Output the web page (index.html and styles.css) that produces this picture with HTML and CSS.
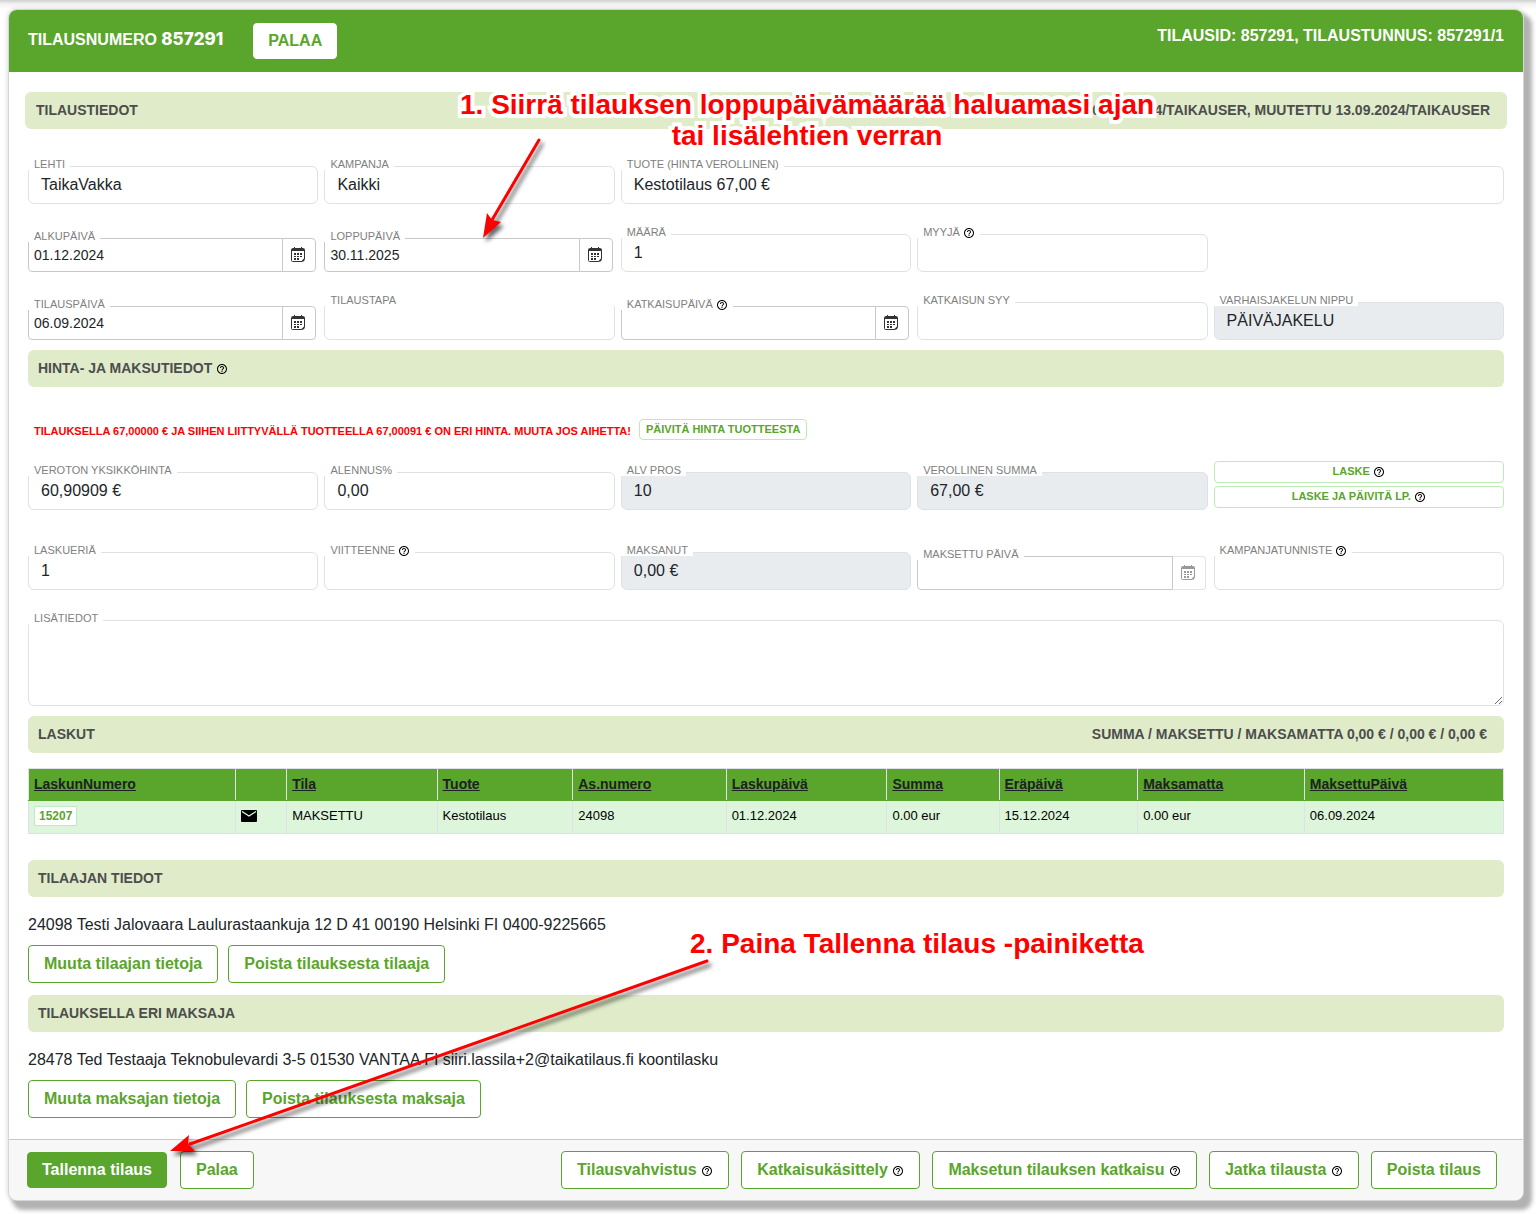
FILE: index.html
```html
<!DOCTYPE html>
<html lang="fi">
<head>
<meta charset="utf-8">
<title>Tilausnumero 857291</title>
<link rel="stylesheet" href="styles.css">
</head>
<body>
<svg class="sprite" aria-hidden="true">
  <symbol id="help" viewBox="0 0 24 24"><path d="M11 18h2v-2h-2v2zm1-16C6.480 2 2 6.480 2 12s4.480 10 10 10 10-4.480 10-10S17.520 2 12 2zm0 18c-4.410 0-8-3.590-8-8s3.590-8 8-8 8 3.590 8 8-3.590 8-8 8zm0-14c-2.210 0-4 1.790-4 4h2c0-1.100.900-2 2-2s2 .900 2 2c0 2-3 1.750-3 5h2c0-2.250 3-2.500 3-5 0-2.210-1.790-4-4-4z" fill="currentColor"/></symbol>
  <symbol id="cal" viewBox="0 0 14 15"><path d="M1.500 1.500h11a1 1 0 0 1 1 1v9.500l-2.500 2.500H1.500a1 1 0 0 1-1-1V2.500a1 1 0 0 1 1-1z" fill="none" stroke="currentColor"/><path d="M1 2h12v2H1zM3 0h1v2H3zM10 0h1v2h-1zM3 6h2v2H3zM6 6h2v2H6zM9 6h2v2H9zM3 9h2v1H3zM6 9h2v1H6zM9 9h2v1H9zM3 11h2v2H3zM6 11h2v2H6zM13.500 11v2.500l-1 1H10z" fill="currentColor"/></symbol>
</svg>

<main class="card">
  <header class="card-head">
    <div class="head-left">
      <h1>TILAUSNUMERO <span class="num">857291</span></h1>
      <button class="btn btn-white" type="button">PALAA</button>
    </div>
    <p class="head-right">TILAUSID: 857291, TILAUSTUNNUS: 857291/1</p>
  </header>

  <div class="card-body">
    <h2 class="bar bar-wide"><span>TILAUSTIEDOT</span><span>LUOTU 06.09.2024/TAIKAUSER, MUUTETTU 13.09.2024/TAIKAUSER</span></h2>

    <div class="rows">
      <div class="row">
        <div class="field"><label for="lehti">LEHTI</label><input id="lehti" type="text" value="TaikaVakka"></div>
        <div class="field"><label for="kampanja">KAMPANJA</label><input id="kampanja" type="text" value="Kaikki"></div>
        <div class="field span3"><label for="tuote">TUOTE (HINTA VEROLLINEN)</label><input id="tuote" type="text" value="Kestotilaus 67,00 €"></div>
      </div>
      <div class="row">
        <div class="field date"><label for="alku">ALKUPÄIVÄ</label><input id="alku" type="text" value="01.12.2024"><button type="button" aria-label="Valitse alkupäivä"><svg><use href="#cal"/></svg></button></div>
        <div class="field date"><label for="loppu">LOPPUPÄIVÄ</label><input id="loppu" type="text" value="30.11.2025"><button type="button" aria-label="Valitse loppupäivä"><svg><use href="#cal"/></svg></button></div>
        <div class="field"><label for="maara">MÄÄRÄ</label><input id="maara" type="text" value="1"></div>
        <div class="field"><label for="myyja">MYYJÄ <svg class="help"><use href="#help"/></svg></label><input id="myyja" type="text"></div>
      </div>
      <div class="row">
        <div class="field date"><label for="tilaus">TILAUSPÄIVÄ</label><input id="tilaus" type="text" value="06.09.2024"><button type="button" aria-label="Valitse tilauspäivä"><svg><use href="#cal"/></svg></button></div>
        <div class="field open"><label for="tapa">TILAUSTAPA</label><input id="tapa" type="text"></div>
        <div class="field date"><label for="katko">KATKAISUPÄIVÄ <svg class="help"><use href="#help"/></svg></label><input id="katko" type="text"><button type="button" aria-label="Valitse katkaisupäivä"><svg><use href="#cal"/></svg></button></div>
        <div class="field"><label for="syy">KATKAISUN SYY</label><input id="syy" type="text"></div>
        <div class="field"><label for="nippu">VARHAISJAKELUN NIPPU</label><input id="nippu" type="text" value="PÄIVÄJAKELU" readonly></div>
      </div>
    </div>

    <h2 class="bar"><span>HINTA- JA MAKSUTIEDOT <svg class="help"><use href="#help"/></svg></span></h2>

    <div class="warning">
      <p>TILAUKSELLA 67,00000 € JA SIIHEN LIITTYVÄLLÄ TUOTTEELLA 67,00091 € ON ERI HINTA. MUUTA JOS AIHETTA!</p>
      <button class="btn-small" type="button">PÄIVITÄ HINTA TUOTTEESTA</button>
    </div>

    <div class="rows rows-price">
      <div class="row price">
        <div class="field"><label for="yksikko">VEROTON YKSIKKÖHINTA</label><input id="yksikko" type="text" value="60,90909 €"></div>
        <div class="field"><label for="alennus">ALENNUS%</label><input id="alennus" type="text" value="0,00"></div>
        <div class="field"><label for="alv">ALV PROS</label><input id="alv" type="text" value="10" readonly></div>
        <div class="field"><label for="summa">VEROLLINEN SUMMA</label><input id="summa" type="text" value="67,00 €" readonly></div>
        <div class="calc">
          <button class="btn-small" type="button">LASKE <svg class="help"><use href="#help"/></svg></button>
          <button class="btn-small" type="button">LASKE JA PÄIVITÄ LP. <svg class="help"><use href="#help"/></svg></button>
        </div>
      </div>
      <div class="row pay">
        <div class="field"><label for="eria">LASKUERIÄ</label><input id="eria" type="text" value="1"></div>
        <div class="field"><label for="viite">VIITTEENNE <svg class="help"><use href="#help"/></svg></label><input id="viite" type="text"></div>
        <div class="field"><label for="maksanut">MAKSANUT</label><input id="maksanut" type="text" value="0,00 €" readonly></div>
        <div class="field date"><label for="maksettu">MAKSETTU PÄIVÄ</label><input id="maksettu" type="text"><button type="button" aria-label="Valitse maksupäivä" disabled><svg><use href="#cal"/></svg></button></div>
        <div class="field"><label for="tunniste">KAMPANJATUNNISTE <svg class="help"><use href="#help"/></svg></label><input id="tunniste" type="text"></div>
      </div>
      <div class="field"><label for="lisa">LISÄTIEDOT</label><textarea id="lisa"></textarea></div>
    </div>

    <h2 class="bar"><span>LASKUT</span><span>SUMMA / MAKSETTU / MAKSAMATTA 0,00 € / 0,00 € / 0,00 €</span></h2>

    <table class="bills">
      <colgroup><col class="c1"><col class="c2"><col class="c3"><col class="c4"><col class="c5"><col class="c6"><col class="c7"><col class="c8"><col class="c9"><col></colgroup>
      <thead>
        <tr><th><a href="#">LaskunNumero</a></th><th></th><th><a href="#">Tila</a></th><th><a href="#">Tuote</a></th><th><a href="#">As.numero</a></th><th><a href="#">Laskupäivä</a></th><th><a href="#">Summa</a></th><th><a href="#">Eräpäivä</a></th><th><a href="#">Maksamatta</a></th><th><a href="#">MaksettuPäivä</a></th></tr>
      </thead>
      <tbody>
        <tr><td><button class="bill" type="button">15207</button></td><td><svg class="mail" viewBox="0 0 16 12"><rect width="16" height="12" rx="1"/><path d="M1 1.500l7 4.500 7-4.500" fill="none" stroke="#ddf5da" stroke-width="1.300"/></svg></td><td>MAKSETTU</td><td>Kestotilaus</td><td>24098</td><td>01.12.2024</td><td>0.00 eur</td><td>15.12.2024</td><td>0.00 eur</td><td>06.09.2024</td></tr>
      </tbody>
    </table>

    <h2 class="bar">TILAAJAN TIEDOT</h2>
    <p class="person">24098 Testi Jalovaara Laulurastaankuja 12 D 41 00190 Helsinki FI 0400-9225665</p>
    <div class="actions">
      <button class="btn" type="button">Muuta tilaajan tietoja</button>
      <button class="btn" type="button">Poista tilauksesta tilaaja</button>
    </div>

    <h2 class="bar">TILAUKSELLA ERI MAKSAJA</h2>
    <p class="person">28478 Ted Testaaja Teknobulevardi 3-5 01530 VANTAA FI siiri.lassila+2@taikatilaus.fi koontilasku</p>
    <div class="actions">
      <button class="btn" type="button">Muuta maksajan tietoja</button>
      <button class="btn" type="button">Poista tilauksesta maksaja</button>
    </div>
  </div>

  <footer class="card-foot">
    <div class="foot-group foot-main">
      <button class="btn btn-green" type="button">Tallenna tilaus</button>
      <button class="btn" type="button">Palaa</button>
    </div>
    <div class="foot-group">
      <button class="btn" type="button">Tilausvahvistus <svg class="help"><use href="#help"/></svg></button>
      <button class="btn" type="button">Katkaisukäsittely <svg class="help"><use href="#help"/></svg></button>
      <button class="btn" type="button">Maksetun tilauksen katkaisu <svg class="help"><use href="#help"/></svg></button>
      <button class="btn" type="button">Jatka tilausta <svg class="help"><use href="#help"/></svg></button>
      <button class="btn" type="button">Poista tilaus</button>
    </div>
  </footer>
</main>

<p class="note note-date">1. Siirrä tilauksen loppupäivämäärää haluamasi ajan<br>tai lisälehtien verran</p>
<p class="note note-save">2. Paina Tallenna tilaus -painiketta</p>
<svg class="arrows" width="720" height="1160" aria-hidden="true">
  <g class="arrow"><path d="M539 140L492 220" stroke-width="3"/><path class="tip" d="M483 238L487 213L492 220L501 222Z"/></g>
  <g class="arrow"><path d="M707 961L190 1144" stroke-width="3"/><path class="tip" d="M170 1151L189 1135L188 1144L195 1151Z"/></g>
</svg>
</body>
</html>
```

FILE: styles.css
```css
* { box-sizing: border-box; }
body {
  margin: 0;
  padding: 10px 13px 14px 9px;
  position: relative;
  background: linear-gradient(#d0d0d0, #f2f2f2 4px, #fff 9px) no-repeat;
  background-size: 100% 9px;
  font: 16px/24px "Liberation Sans", Arial, sans-serif;
  color: #212529;
}
h1, h2, p { margin: 0; }
button, input, textarea { font: inherit; }
.sprite { display: none; }

.card {
  background: #fff;
  border-radius: 8px;
  box-shadow: 0 0 0 1px #d6d6d6, 6px 7px 4px 3px #b2b2b2, 0 0 4px 2px #e0e0e0;
}
.card-head {
  display: flex;
  justify-content: space-between;
  align-items: flex-start;
  height: 62px;
  padding: 13px 19px 0 19px;
  background: #5aa52b;
  border-radius: 8px 8px 0 0;
  color: #fff;
  font-weight: bold;
}
.head-left { display: flex; gap: 30px; }
.head-right { line-height: 26px; }
h1 { font-size: 16px; line-height: 32px; }
.num { font-family: Inter, sans-serif; font-size: 17px; font-weight: 800; }
.card-body { padding: 20px 19px 21px 19px; }

.bar {
  display: flex;
  justify-content: space-between;
  height: 37px;
  padding: 0 17px 0 10px;
  border-radius: 6px;
  background: #dfebc9;
  color: #4d4d4d;
  font-size: 14px;
  line-height: 37px;
}
.bar-wide { margin: 0 -3px; padding-left: 11px; }
.help { width: 12px; height: 12px; color: #000; vertical-align: -3px; }
.bar .help, .btn .help { vertical-align: -2px; }

.rows { display: grid; gap: 30px; padding: 37px 0 10px; }
.rows-price { padding: 18px 0 10px; }
.row { display: grid; grid-template-columns: repeat(5, 1fr); column-gap: 6px; align-items: end; }
.price { margin-bottom: 12px; }
.span3 { grid-column: span 3; }

.field { position: relative; display: flex; min-width: 0; }
.field label {
  position: absolute;
  left: 0;
  top: -9px;
  height: 13px;
  padding: 0 5px 0 6px;
  background: #fff;
  color: #808080;
  font-size: 11px;
  line-height: 14px;
  white-space: nowrap;
}
.open label { right: 0; }
.field input, .field textarea {
  flex: 1;
  min-width: 0;
  height: 38px;
  padding: 0 12px;
  border: 1px solid #dee2e6;
  border-radius: 6px;
  background: #fff;
  color: #212529;
  outline: 0;
}
.field input[readonly] { background: #e9ecef; }
.field textarea { height: 86px; padding: 12px; }
.date { padding-right: 2px; }
.field.date input {
  height: 34px;
  padding: 0 5px;
  border-color: #c8c8c8;
  border-radius: 4px 0 0 4px;
  font-size: 14px;
}
.date button {
  display: grid;
  place-items: center;
  width: 34px;
  height: 34px;
  margin-left: -1px;
  padding: 0 2px 1px 0;
  border: 1px solid #c8c8c8;
  border-radius: 0 4px 4px 0;
  background: #fff;
  color: #333;
}
.date button svg { width: 14px; height: 15px; }
.date button:disabled { border-color: #e3e3e3; border-left-color: #c8c8c8; color: #999; }

.warning { display: flex; gap: 8px; padding: 32px 0 0 6px; }
.warning p { color: #f00; font-size: 11px; font-weight: bold; line-height: 24px; }
.btn-small {
  height: 21px;
  padding: 0 6px;
  border: 1px solid #bdebb5;
  border-radius: 4px;
  background: #fff;
  color: #5aa52b;
  font-size: 11px;
  font-weight: bold;
  line-height: 19px;
}
.calc { display: grid; gap: 3px; padding-bottom: 2px; }
.calc .btn-small { height: 22px; padding-bottom: 2px; line-height: 18px; }

.bills {
  width: 100%;
  margin: 15px 0 26px;
  table-layout: fixed;
  border-collapse: collapse;
  color: #000;
  font-size: 13px;
  line-height: 20px;
}
.bills th, .bills td { padding: 0 5px 2px; border: 1px solid #dee2e6; text-align: left; }
.bills th { height: 32px; background: #5aa52b; border-bottom-color: #5aa52b; font-size: 14px; }
.bills td { height: 33px; background: #ddf5da; }
.bills th a { color: #1d2124; }
.c1 { width: 14%; }
.c2 { width: 3.5%; }
.c3 { width: 10.2%; }
.c4 { width: 9.2%; }
.c5 { width: 10.4%; }
.c6 { width: 10.9%; }
.c7 { width: 7.6%; }
.c8 { width: 9.4%; }
.c9 { width: 11.3%; }
.bill {
  height: 20px;
  padding: 0 4px;
  border: 1px solid #bdebc5;
  background: #fff;
  color: #5aa52b;
  font-size: 12px;
  font-weight: bold;
  line-height: 18px;
}
.mail { display: block; width: 16px; height: 12px; }

.person { padding: 16px 0 8px; }
.actions { display: flex; gap: 10px; }
.actions + .bar { margin-top: 12px; }
.btn {
  height: 38px;
  padding: 0 15px;
  border: 1px solid #5aa52b;
  border-radius: 4px;
  background: #fff;
  color: #5aa52b;
  font-size: 16px;
  font-weight: bold;
  line-height: 24px;
  white-space: nowrap;
}
.btn-white { height: 36px; padding: 0 14px; border-color: #fff; }
.btn-green { height: 36px; padding: 0 14px; background: #5aa52b; color: #fff; }

.card-foot {
  display: flex;
  justify-content: space-between;
  align-items: center;
  height: 61px;
  padding: 0 26px 0 18px;
  border-top: 1px solid #c8c8c8;
  border-radius: 0 0 8px 8px;
  background: #f7f7f7;
}
.foot-group { display: flex; align-items: center; gap: 12px; }
.foot-main { gap: 13px; }

.note {
  position: absolute;
  color: #f00;
  font-size: 28px;
  font-weight: bold;
  line-height: 31px;
  text-align: center;
  white-space: nowrap;
  -webkit-text-stroke: 8px #fff;
  paint-order: stroke fill;
  stroke-linejoin: round;
}
.note-date { left: 460px; top: 89px; }
.note-save { left: 690px; top: 928px; }
.arrows { position: absolute; left: 0; top: 0; pointer-events: none; }
.arrow { stroke: #f00; fill: none; stroke-linecap: round; filter: drop-shadow(3px 4px 2px rgba(0, 0, 0, .6)); }
.tip { fill: #f00; stroke: none; }
```
